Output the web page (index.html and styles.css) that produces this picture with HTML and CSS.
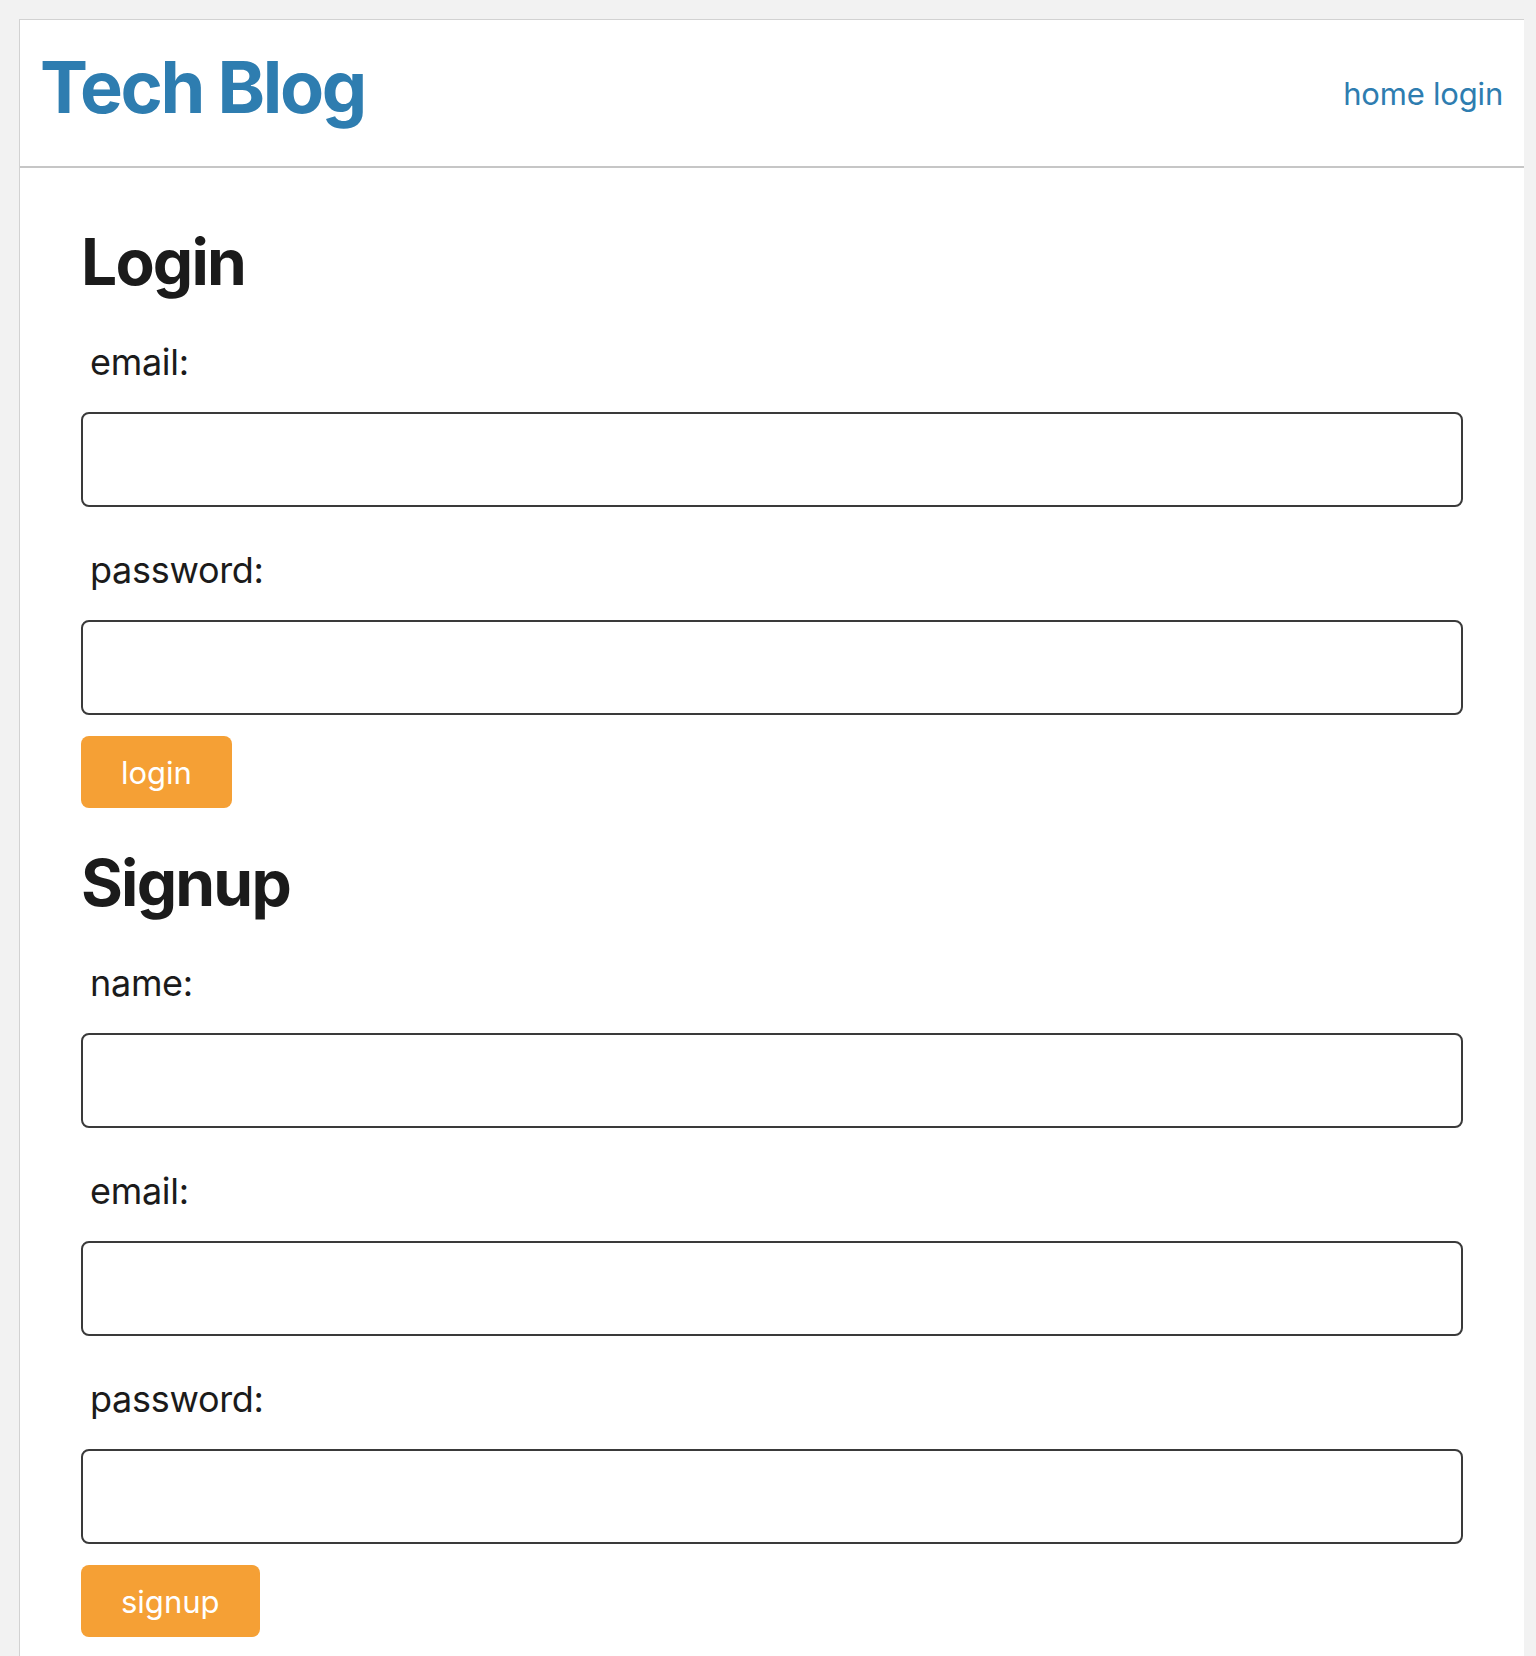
FILE: index.html
```html
<!DOCTYPE html>
<html lang="en">
<head>
<meta charset="utf-8">
<title>Tech Blog</title>
<link rel="stylesheet" href="styles.css">
</head>
<body>
<div class="page">
  <header class="site-header">
    <h1 class="brand">Tech Blog</h1>
    <nav class="nav"><a href="#">home</a> <a href="#">login</a></nav>
  </header>
  <main class="content">
    <section class="form-section">
      <h2 class="form-title">Login</h2>
      <form class="form">
        <label class="field-label" for="login-email">email:</label>
        <input class="field-input" id="login-email" type="text">
        <label class="field-label" for="login-password">password:</label>
        <input class="field-input" id="login-password" type="password">
        <button class="btn" type="button">login</button>
      </form>
    </section>
    <section class="form-section">
      <h2 class="form-title">Signup</h2>
      <form class="form">
        <label class="field-label" for="signup-name">name:</label>
        <input class="field-input" id="signup-name" type="text">
        <label class="field-label" for="signup-email">email:</label>
        <input class="field-input" id="signup-email" type="text">
        <label class="field-label" for="signup-password">password:</label>
        <input class="field-input" id="signup-password" type="password">
        <button class="btn" type="button">signup</button>
      </form>
    </section>
  </main>
</div>
</body>
</html>
```
FILE: styles.css
```css
* { box-sizing: border-box; }

html, body {
  margin: 0;
  padding: 0;
}

body {
  background: #f2f2f2;
  font-family: Inter, "Noto Sans", "Liberation Sans", sans-serif;
  color: #1b1b1b;
  padding: 19px 12px 0 19px;
  min-height: 1656px;
}

.page {
  background: #ffffff;
  border-top: 1px solid #d2d2d2;
  border-left: 1px solid #d2d2d2;
  min-height: 1660px;
}

.site-header {
  display: flex;
  justify-content: space-between;
  align-items: flex-start;
  height: 148px;
  padding: 0 21px 0 20px;
  border-bottom: 2px solid #c6c6c6;
}

.brand {
  margin: 31px 0 0;
  font-size: 72px;
  line-height: 72px;
  font-weight: 700;
  color: #2e7db0;
  letter-spacing: -2.4px;
}

.nav {
  margin-top: 58px;
  font-size: 31px;
  line-height: 31px;
  letter-spacing: -0.2px;
}

.nav a {
  color: #2e7db0;
  text-decoration: none;
}

.content {
  padding: 0 61px 0 61px;
}

.form-section:first-child {
  padding-top: 62px;
}

.form-title {
  margin: 0;
  font-size: 64px;
  line-height: 64px;
  font-weight: 700;
  color: #1b1b1b;
  letter-spacing: -1.8px;
}

.form-section + .form-section .form-title {
  margin-top: 43px;
}

.form {
  display: flex;
  flex-direction: column;
  align-items: flex-start;
}

.field-label {
  display: block;
  margin-top: 45px;
  padding-left: 9px;
  font-size: 36px;
  line-height: 36px;
  letter-spacing: -0.3px;
}

.form-title + .form .field-label:first-child {
  margin-top: 50px;
}

.field-input {
  display: block;
  width: 100%;
  height: 95px;
  margin-top: 32px;
  border: 2px solid #3a3a3a;
  border-radius: 8px;
  background: #fff;
  font: inherit;
}

.btn {
  margin-top: 21px;
  height: 72px;
  padding: 0 40px;
  border: none;
  border-radius: 8px;
  background: #f5a035;
  color: #ffffff;
  font-family: inherit;
  font-size: 31px;
  line-height: 31px;
}
```
